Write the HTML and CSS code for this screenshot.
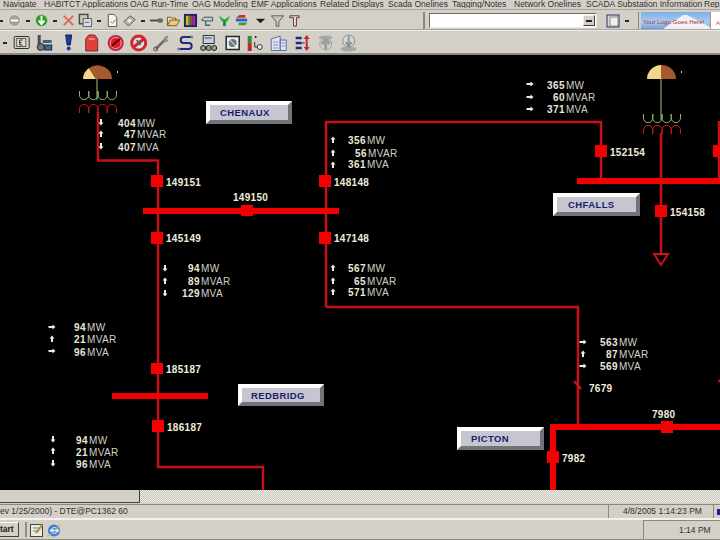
FILE: index.html
```html
<!DOCTYPE html>
<html lang="en">
<head>
<meta charset="utf-8">
<title>One-line display</title>
<link rel="stylesheet" href="styles.css">
</head>
<body>
<div class="app">
  <nav class="menu">
    <span>Navigate</span>
    <span>HABITCT Applications</span>
    <span>OAG Run-Time</span>
    <span>OAG Modeling</span>
    <span>EMF Applications</span>
    <span>Related Displays</span>
    <span>Scada Onelines</span>
    <span>Tagging/Notes</span>
    <span>Network Onelines</span>
    <span>SCADA Substation Information</span>
    <span>Rep</span>
  </nav>

  <div class="tb tb1">
    <i class="drop first"></i>
    <svg class="ico" viewBox="0 0 16 16"><circle cx="8" cy="8" r="6.500" fill="#a4a49c" stroke="#e8e8e0"/><path d="M4 8h8" stroke="#fff" stroke-width="2"/></svg>
    <i class="drop"></i>
    <svg class="ico" viewBox="0 0 16 16"><circle cx="8" cy="8" r="6.500" fill="#2f9a2a" stroke="#bcd8b0"/><path d="M8 3v7M5 8l3 4 3-4" fill="none" stroke="#fff" stroke-width="2"/></svg>
    <i class="drop"></i>
    <svg class="ico" viewBox="0 0 16 16"><path d="M3 3l10 10M13 3L3 13" stroke="#d86a58" stroke-width="2"/></svg>
    <svg class="ico" viewBox="0 0 16 16"><rect x="1.500" y="1.500" width="9" height="10" fill="#c8c8c0" stroke="#404848" stroke-width="1.500"/><rect x="5.500" y="6" width="9" height="8.500" fill="#d8dce0" stroke="#506068"/><path d="M7 10h5" stroke="#4a6a88"/></svg>
    <i class="drop"></i>
    <svg class="ico" viewBox="0 0 16 16"><path d="M3.500 1.500h6l3 3v10h-9z" fill="#f4f4ec" stroke="#505050"/><path d="M6 9l2 2 3-4" fill="none" stroke="#3a9a48"/></svg>
    <svg class="ico" viewBox="0 0 16 16"><path d="M2 9l7-6 5 4-7 7z" fill="#b8b8b0" stroke="#585858"/><circle cx="8" cy="8" r="2" fill="#f0f0e8"/></svg>
    <i class="drop"></i>
    <svg class="ico" viewBox="0 0 16 16"><path d="M1 8h9" stroke="#484848" stroke-width="2"/><ellipse cx="12" cy="8" rx="3" ry="2.500" fill="#686868"/></svg>
    <svg class="ico" viewBox="0 0 16 16"><path d="M1.500 13.500v-9h4l1 1h4v2" fill="#f0dca0" stroke="#705830"/><path d="M1.500 13.500l3-6h10l-3 6z" fill="#e8c878" stroke="#705830"/></svg>
    <svg class="ico" viewBox="0 0 16 16"><rect x="1" y="1" width="14" height="14" fill="#1c2458"/><rect x="3" y="3" width="3" height="10" fill="#d8b828"/><rect x="6" y="3" width="2" height="10" fill="#38a048"/><rect x="8" y="3" width="2" height="10" fill="#c83838"/><rect x="10" y="3" width="3" height="10" fill="#a028a0"/></svg>
    <svg class="ico" viewBox="0 0 16 16"><path d="M1.500 7.500l3-3h9v4h-9z" fill="#d0d0c8" stroke="#384848"/><path d="M6 9v4h5" fill="none" stroke="#208078" stroke-width="1.500"/></svg>
    <svg class="ico" viewBox="0 0 16 16"><path d="M2 3l6 4 6-4-3 6h-6z" fill="#28b048"/><path d="M8 8v6" stroke="#189038" stroke-width="3"/></svg>
    <svg class="ico" viewBox="0 0 16 16"><path d="M6 2h6v3H2z" fill="#c83028"/><path d="M2 6h12v3H2z" fill="#2860c8"/><path d="M5 10h9l-2 3H5z" fill="#30a048"/></svg>
    <svg class="ico nudge" viewBox="0 0 16 16"><path d="M3 6h10l-5 5z" fill="#202020"/></svg>
    <svg class="ico" viewBox="0 0 16 16"><path d="M1.500 3h13l-5 6v5h-3V9z" fill="#c8c8c0" stroke="#585858"/></svg>
    <svg class="ico" viewBox="0 0 16 16"><path d="M3 3h10v2h-3v9H7V5H3z" fill="#f0e8e0" stroke="#602828"/></svg>
    <div class="tb-right">
      <i class="grip"></i>
      <div class="combo"><b class="combo-btn"></b></div>
      <svg class="ico box" viewBox="0 0 14 14"><rect x="1" y="1" width="12" height="12" fill="#d8d8d0" stroke="#202c80"/><rect x="4" y="3" width="8" height="9" fill="#f0f0e8" stroke="#888"/></svg>
      <i class="drop"></i>
      <i class="sep"></i>
      <div class="logo"><svg class="peak" viewBox="0 0 69 17" preserveAspectRatio="none"><path d="M22 17 L42 3 L46 3 L69 15 V17 Z" fill="#eef2f6"/></svg><span class="logo-text">Your Logo Goes Here!</span></div>
      <div class="logo2">A</div>
    </div>
  </div>

  <div class="tb tb2">
    <i class="drop"></i>
    <svg class="ico2" viewBox="0 0 18 18"><rect x="1.500" y="2.500" width="15" height="12" rx="1" fill="#d4d0c8" stroke="#303030"/><rect x="4" y="4.500" width="9" height="8" fill="#e0e0d8" stroke="#606060"/><path d="M7 6v5h3M7 8.500h2M7 6h3" fill="none" stroke="#303030"/></svg>
    <svg class="ico2" viewBox="0 0 18 18"><rect x="2" y="1" width="3" height="9" fill="#405058"/><rect x="7" y="6" width="9" height="3" fill="#506068"/><circle cx="5" cy="13" r="3.500" fill="#707878" stroke="#202828"/><rect x="9" y="11" width="7" height="5" fill="#3868a0" stroke="#182838"/></svg>
    <svg class="ico2" viewBox="0 0 18 18"><path d="M6 1h6l-1.500 10h-3z" fill="#2038a8" stroke="#101c58"/><circle cx="9" cy="14.500" r="2" fill="#2038a8"/></svg>
    <svg class="ico2" viewBox="0 0 18 18"><path d="M3 5l3-4h6l3 4v12H3z" fill="#e04038" stroke="#703028"/><path d="M6 5h6" stroke="#f0d0c8"/></svg>
    <svg class="ico2" viewBox="0 0 18 18"><circle cx="9" cy="9" r="8" fill="#c02840"/><circle cx="9" cy="9" r="5.500" fill="#e81818" stroke="#f0a0b0"/><path d="M5 12l8-7" stroke="#500818" stroke-width="2"/></svg>
    <svg class="ico2" viewBox="0 0 18 18"><circle cx="9" cy="9" r="7" fill="#e0e0d8" stroke="#d02830" stroke-width="3"/><path d="M4 13L14 5" stroke="#d02830" stroke-width="3"/><path d="M7 6l4 5" stroke="#606060" stroke-width="2"/></svg>
    <svg class="ico2" viewBox="0 0 18 18"><path d="M3 15l9-9" stroke="#707068" stroke-width="2.500"/><path d="M11 7a4 4 0 0 1 5-5l-2 3 2 2a4 4 0 0 1-5 0z" fill="#909088"/><circle cx="3" cy="15" r="2" fill="none" stroke="#505050"/></svg>
    <svg class="ico2" viewBox="0 0 18 18"><path d="M15 3H7a3 3 0 0 0 0 6h5a3 3 0 0 1 0 6H2" fill="none" stroke="#1c2c78" stroke-width="2"/><circle cx="15" cy="3" r="1.500" fill="#708090"/><circle cx="2" cy="15" r="1.500" fill="#708090"/></svg>
    <svg class="ico2" viewBox="0 0 18 18"><rect x="3.500" y="1.500" width="11" height="8" fill="#c8d0d8" stroke="#303840"/><path d="M5 4h7" stroke="#2050a0"/><circle cx="3.500" cy="14" r="2.500" fill="#a0a098" stroke="#202020"/><circle cx="9" cy="14" r="2.500" fill="#a0a098" stroke="#202020"/><circle cx="14.500" cy="14" r="2.500" fill="#a0a098" stroke="#202020"/></svg>
    <svg class="ico2" viewBox="0 0 18 18"><rect x="2.500" y="2.500" width="13" height="13" fill="#f0f0e8" stroke="#202830" stroke-width="1.500"/><circle cx="9" cy="9" r="4" fill="#687888"/><path d="M5 5l8 8" stroke="#fff"/></svg>
    <svg class="ico2" viewBox="0 0 18 18"><rect x="1" y="2" width="4" height="7" fill="#309038"/><rect x="1" y="9" width="4" height="8" fill="#c02828"/><circle cx="9" cy="3" r="1" fill="#202020"/><path d="M8 8v5h4" fill="none" stroke="#303030"/><circle cx="13" cy="13" r="2.500" fill="#f0f0e8" stroke="#303030"/></svg>
    <svg class="ico2" viewBox="0 0 18 18"><path d="M1.500 16.500V5l9-3v14.500zM10.500 6h6v10.500h-6z" fill="#e0e4f0" stroke="#5870b0"/><path d="M3.500 8h5M3.500 11h5M3.500 14h5M12 9h3M12 12h3" stroke="#8090c0"/></svg>
    <svg class="ico2" viewBox="0 0 18 18"><path d="M2 4h6M2 9h6M2 14h6" stroke="#1c2c88" stroke-width="2.500"/><path d="M13 1l3 4h-6zM13 17l3-4h-6z" fill="#c02838"/><path d="M13 5v8" stroke="#c02838" stroke-width="2"/><path d="M8 9h3" stroke="#303030"/></svg>
    <svg class="ico2" viewBox="0 0 18 18"><ellipse cx="9" cy="3.500" rx="7" ry="2" fill="#a8a8a0"/><path d="M9 16V8M5 10l4-5 4 5" fill="none" stroke="#98a0a0" stroke-width="3"/><circle cx="9" cy="10" r="6" fill="none" stroke="#a8a8a0"/></svg>
    <svg class="ico2" viewBox="0 0 18 18"><ellipse cx="9" cy="15" rx="8" ry="2.500" fill="#a0a8a8"/><circle cx="9" cy="7" r="6" fill="#d8d8d0" stroke="#88908c"/><path d="M9 2v9M6 8l3 4 3-4" fill="none" stroke="#889498" stroke-width="2"/></svg>
  </div>

  <main class="canvas">
    <svg class="diagram" viewBox="0 55 720 435">
      <defs>
        <g id="arrow-up"><path d="M0-3.500L2.500-.5H1V3H-1V-.5H-2.500Z"/></g>
        <g id="arrow-down"><path d="M0 3.500L2.500 .5H1V-3H-1V.5H-2.500Z"/></g>
        <g id="arrow-right"><path d="M-3.500-1H.5V-2.500L3.500 0 .5 2.500V1H-3.500Z"/></g>
        <g id="green-coil"><path d="M0 0v4a4.600 4.600 0 0 0 9.250 0v-4v4a4.600 4.600 0 0 0 9.250 0v-4v4a4.600 4.600 0 0 0 9.250 0v-4v4a4.600 4.600 0 0 0 9.250 0v-4"/></g>
        <g id="red-coil"><path d="M0 9v-4a4.600 4.600 0 0 1 9.250 0v4v-4a4.600 4.600 0 0 1 9.250 0v4v-4a4.600 4.600 0 0 1 9.250 0v4v-4a4.600 4.600 0 0 1 9.250 0v4"/></g>
      </defs>

      <g class="thin">
        <path d="M98 112V160.500H158V467H263V490"/>
        <path d="M326 307V122H601V181"/>
        <path d="M326 307H578V424"/>
        <path d="M661 133V253"/>
        <path d="M719 121V180"/>
        <path d="M574 381L581 389"/>
        <path d="M718 381H720"/>
      </g>
      <path class="thin tri" d="M654 254H668L661 265Z"/>

      <g class="bus">
        <rect x="143" y="208" width="196" height="6"/>
        <rect x="577" y="178" width="143" height="6"/>
        <rect x="112" y="393" width="96" height="6"/>
        <rect x="550" y="424" width="170" height="6"/>
        <rect x="550" y="424" width="6" height="66"/>
      </g>
      <g class="bus">
        <rect x="151" y="175" width="12" height="12"/>
        <rect x="241" y="205" width="12" height="11"/>
        <rect x="151" y="232" width="12" height="12"/>
        <rect x="319" y="175" width="12" height="12"/>
        <rect x="319" y="232" width="12" height="12"/>
        <rect x="595" y="145" width="12" height="12"/>
        <rect x="713" y="145" width="7" height="12"/>
        <rect x="655" y="205" width="12" height="12"/>
        <rect x="151" y="363" width="12" height="11"/>
        <rect x="152" y="420" width="12" height="12"/>
        <rect x="661" y="421" width="12" height="12"/>
        <rect x="547" y="451" width="12" height="12"/>
      </g>

      <!-- generators -->
      <path class="dome-cream" d="M83 79a14.500 14 0 0 1 6-11L96 79Z"/>
      <path class="dome-brown" d="M89 68a14.500 14 0 0 1 23 11H96Z"/>
      <path class="stem" d="M97 79V100"/>
      <use class="coil-g" href="#green-coil" x="79.500" y="91"/>
      <use class="coil-r" href="#red-coil" x="79.500" y="104"/>
      <rect class="speck" x="117" y="71" width="1" height="2"/>

      <path class="dome-cream" d="M647 79a14.500 14 0 0 1 14-14V79Z"/>
      <path class="dome-brown" d="M661 65a14.500 14 0 0 1 15 14H661Z"/>
      <path class="stem" d="M661 79V120"/>
      <use class="coil-g" href="#green-coil" x="643.500" y="114"/>
      <use class="coil-r" href="#red-coil" x="643.500" y="125"/>
      <rect class="speck" x="681" y="71" width="1" height="2"/>

      <!-- flow arrows -->
      <g class="arw">
        <use href="#arrow-down" x="101" y="122"/><use href="#arrow-up" x="101" y="134"/><use href="#arrow-down" x="101" y="146"/>
        <use href="#arrow-up" x="333" y="140"/><use href="#arrow-up" x="333" y="153"/><use href="#arrow-up" x="333" y="165"/>
        <use href="#arrow-right" x="530" y="84"/><use href="#arrow-right" x="530" y="97"/><use href="#arrow-right" x="530" y="109"/>
        <use href="#arrow-down" x="165" y="268"/><use href="#arrow-up" x="165" y="281"/><use href="#arrow-down" x="165" y="293"/>
        <use href="#arrow-up" x="333" y="268"/><use href="#arrow-up" x="333" y="281"/><use href="#arrow-up" x="333" y="292"/>
        <use href="#arrow-right" x="52" y="327"/><use href="#arrow-up" x="52" y="339"/><use href="#arrow-right" x="52" y="351"/>
        <use href="#arrow-right" x="583" y="342"/><use href="#arrow-up" x="583" y="354"/><use href="#arrow-right" x="583" y="366"/>
        <use href="#arrow-down" x="53" y="439"/><use href="#arrow-up" x="53" y="451"/><use href="#arrow-down" x="53" y="463"/>
      </g>

      <!-- readings -->
      <g class="val">
        <text x="118" y="127">404<tspan class="unit" dx="1">MW</tspan></text>
        <text x="124" y="138">47<tspan class="unit" dx="1">MVAR</tspan></text>
        <text x="118" y="151">407<tspan class="unit" dx="1">MVA</tspan></text>
        <text x="348" y="144">356<tspan class="unit" dx="1">MW</tspan></text>
        <text x="355" y="157">56<tspan class="unit" dx="1">MVAR</tspan></text>
        <text x="348" y="168">361<tspan class="unit" dx="1">MVA</tspan></text>
        <text x="547" y="89">365<tspan class="unit" dx="1">MW</tspan></text>
        <text x="553" y="101">60<tspan class="unit" dx="1">MVAR</tspan></text>
        <text x="547" y="113">371<tspan class="unit" dx="1">MVA</tspan></text>
        <text x="188" y="272">94<tspan class="unit" dx="1">MW</tspan></text>
        <text x="188" y="285">89<tspan class="unit" dx="1">MVAR</tspan></text>
        <text x="182" y="297">129<tspan class="unit" dx="1">MVA</tspan></text>
        <text x="348" y="272">567<tspan class="unit" dx="1">MW</tspan></text>
        <text x="354" y="285">65<tspan class="unit" dx="1">MVAR</tspan></text>
        <text x="348" y="296">571<tspan class="unit" dx="1">MVA</tspan></text>
        <text x="74" y="331">94<tspan class="unit" dx="1">MW</tspan></text>
        <text x="74" y="343">21<tspan class="unit" dx="1">MVAR</tspan></text>
        <text x="74" y="356">96<tspan class="unit" dx="1">MVA</tspan></text>
        <text x="600" y="346">563<tspan class="unit" dx="1">MW</tspan></text>
        <text x="606" y="358">87<tspan class="unit" dx="1">MVAR</tspan></text>
        <text x="600" y="370">569<tspan class="unit" dx="1">MVA</tspan></text>
        <text x="76" y="444">94<tspan class="unit" dx="1">MW</tspan></text>
        <text x="76" y="456">21<tspan class="unit" dx="1">MVAR</tspan></text>
        <text x="76" y="468">96<tspan class="unit" dx="1">MVA</tspan></text>
      </g>

      <!-- node ids -->
      <g class="node">
        <text x="166" y="186">149151</text>
        <text x="233" y="201">149150</text>
        <text x="166" y="242">145149</text>
        <text x="334" y="186">148148</text>
        <text x="334" y="242">147148</text>
        <text x="610" y="156">152154</text>
        <text x="670" y="216">154158</text>
        <text x="166" y="373">185187</text>
        <text x="167" y="431">186187</text>
        <text x="589" y="392">7679</text>
        <text x="652" y="418">7980</text>
        <text x="562" y="462">7982</text>
      </g>

      <!-- station buttons -->
      <g class="st">
        <rect class="st-dark" x="206" y="101" width="86" height="23"/><path class="st-light" d="M206 124V101H292L288 105H210V120Z"/><rect class="st-face" x="210" y="105" width="78" height="15"/><text x="220" y="116">CHENAUX</text>
        <rect class="st-dark" x="553" y="193" width="87" height="23"/><path class="st-light" d="M553 216V193H640L636 197H557V212Z"/><rect class="st-face" x="557" y="197" width="79" height="15"/><text x="568" y="208">CHFALLS</text>
        <rect class="st-dark" x="238" y="384" width="86" height="22"/><path class="st-light" d="M238 406V384H324L320 388H242V402Z"/><rect class="st-face" x="242" y="388" width="78" height="14"/><text x="251" y="399">REDBRIDG</text>
        <rect class="st-dark" x="457" y="427" width="87" height="23"/><path class="st-light" d="M457 450V427H544L540 431H461V446Z"/><rect class="st-face" x="461" y="431" width="79" height="15"/><text x="471" y="442">PICTON</text>
      </g>
    </svg>
  </main>

  <div class="hscroll"><div class="thumb"></div><div class="track"></div></div>

  <footer class="status">
    <div class="st-main">ev 1/25/2000) - DTE@PC1362 60</div>
    <div class="st-time">4/8/2005 1:14:23 PM</div>
    <div class="st-end"><i class="st-blue"></i></div>
  </footer>

  <div class="task">
    <div class="start">tart</div>
    <i class="grip task-grip"></i>
    <svg class="ql" viewBox="0 0 16 16"><rect x="1.500" y="2.500" width="12" height="12" fill="#e8ecd8" stroke="#304858"/><path d="M4 6h6M4 9h6" stroke="#608098"/><path d="M7 11L14 2" stroke="#c88028" stroke-width="2"/></svg>
    <svg class="ql" viewBox="0 0 16 16"><circle cx="8" cy="8.500" r="6" fill="#3c80d8"/><path d="M4 8.500h9" stroke="#e8f0f8" stroke-width="2"/><circle cx="8.500" cy="8.500" r="3" fill="none" stroke="#e8f0f8"/><path d="M1 14c2 1 10-7 13-12" fill="none" stroke="#d8b050"/></svg>
    <div class="tray">1:14 PM</div>
  </div>
</div>
</body>
</html>
```

FILE: styles.css
```css
* { box-sizing: border-box; }
html, body { margin: 0; padding: 0; background: #d4d0c8; overflow: hidden; }
.app {
  width: 720px; height: 540px; display: flex; flex-direction: column;
  font-family: "Liberation Sans", Arial, sans-serif; color: #1c1c1c; overflow: hidden;
}

/* menu */
.menu {
  height: 10px; flex: none; display: grid; overflow: hidden; align-items: start;
  grid-template-columns: 41px 86px 62px 59px 69px 68px 64px 62px 72px 118px 16px;
  padding-left: 3px; font-size: 8.500px; line-height: 8px; white-space: nowrap;
  color: #303030; border-bottom: 1px solid #a8a49c; background: #d4d0c8;
}
.menu span { overflow: hidden; }

/* toolbars */
.tb { flex: none; display: flex; align-items: center; background: #d4d0c8; }
.tb1 { height: 20px; padding-top: 2px; border-bottom: 1px solid #aaa69e; }
.tb2 { height: 25px; padding-top: 2px; border-bottom: 2px solid #8c8880; border-top: 1px solid #eeece6; }
.ico { width: 17px; height: 15px; flex: none; display: block; }
.ico2 { width: 23.400px; height: 18px; flex: none; display: block; }
.nudge { margin-left: 2px; }
.drop { width: 10px; height: 4px; flex: none; display: block; }
.drop::after { content: ""; display: block; width: 4px; height: 2px; margin: 1px auto; background: #282828; }
.drop.first { width: 6px; margin-left: -2px; margin-right: 2px; }

.tb-right { margin-left: auto; width: 297px; height: 17px; display: flex; align-items: center; }
.grip { width: 2px; height: 17px; flex: none; display: block; background: #8c8880; }
.combo {
  width: 168px; height: 15px; margin-left: 4px; flex: none; display: flex; justify-content: flex-end; align-items: center;
  background: #fff; border: 1px solid #6c6860; border-right-color: #eee; border-bottom-color: #eee;
}
.combo-btn {
  width: 12px; height: 11px; margin-right: 1px; display: block; background: #d4d0c8;
  border: 1px solid #404040; border-top-color: #f0f0f0; border-left-color: #f0f0f0;
  background-image: linear-gradient(#202020, #202020); background-size: 6px 2px;
  background-position: center; background-repeat: no-repeat;
}
.box { margin-left: 9px; width: 14px; height: 14px; }
.tb-right .drop { margin-left: 2px; }
.sep { width: 1px; height: 17px; margin-left: 6px; flex: none; display: block; background: #8c8880; }
.logo {
  width: 69px; height: 17px; margin-left: 2px; flex: none; position: relative; overflow: hidden;
  background: linear-gradient(#7cb0e4, #a8cdf0 60%, #70a0d8);
}
.peak { position: absolute; left: 0; top: 0; width: 69px; height: 17px; }
.logo-text {
  position: absolute; left: 2px; top: 5px; font-size: 6.200px; line-height: 9px; color: #c01830; white-space: nowrap;
}
.logo2 {
  width: 12px; height: 17px; flex: none; background: #fff; color: #d04040; border-left: 1px solid #b09090;
  font-size: 6px; line-height: 22px; padding-left: 5px; overflow: hidden;
}

/* diagram */
.canvas { flex: none; height: 435px; background: #000; }
.diagram { display: block; width: 720px; height: 435px; }
.thin { fill: none; stroke: #c8101a; stroke-width: 2.500; }
.tri { stroke: #d01018; stroke-width: 2; }
.bus { fill: #f40000; }
.dome-cream { fill: #f0d888; }
.dome-brown { fill: #a55a2c; }
.stem { stroke: #9cc080; stroke-width: 1; fill: none; }
.coil-g { fill: none; stroke: #88b868; stroke-width: 1; }
.coil-r { fill: none; stroke: #c81818; stroke-width: 1; }
.speck { fill: #d8d8d0; }
.arw { fill: #f0ece0; }
.val text { font-size: 10px; font-weight: 700; fill: #ebe7da; letter-spacing: .4px; }
.val .unit { font-weight: 400; fill: #d4d0c8; }
.node text { font-size: 10px; font-weight: 700; fill: #f0ecdc; letter-spacing: .3px; }
.st-dark { fill: #72727a; }
.st-light { fill: #fff; }
.st-face { fill: #c6c6d0; }
.st text { font-size: 9.500px; font-weight: 700; fill: #1c1c6c; letter-spacing: .4px; }

/* scrollbar */
.hscroll { flex: none; height: 13px; margin-bottom: 1px; display: flex; }
.thumb { width: 140px; background: #d4d0c8; border-right: 1px solid #404040; border-bottom: 1px solid #404040; }
.track {
  flex: 1; background-color: #fff;
  background-image: conic-gradient(#c4c0b8 25%, #f4f2ee 25% 50%, #c4c0b8 50% 75%, #f4f2ee 75%);
  background-size: 2px 2px;
}

/* status */
.status {
  flex: none; height: 16px; display: flex; font-size: 8.500px; line-height: 13px;
  border-top: 1px solid #8c8880; border-bottom: 2px solid #f4f2ee; white-space: nowrap; color: #303030;
}
.st-main { width: 609px; border-right: 1px solid #8c8880; }
.st-time { width: 104px; padding-left: 13px; border-right: 1px solid #8c8880; margin-left: 1px; }
.st-end { flex: 1; display: flex; align-items: center; justify-content: flex-end; }
.st-blue { display: block; width: 3px; height: 6px; background: #1820a0; }

/* taskbar */
.task { flex: 1; display: flex; align-items: center; border-bottom: 1px solid #908c84; font-size: 8.500px; }
.start {
  width: 19px; height: 15px; flex: none; font-weight: 700; line-height: 13px; white-space: nowrap;
  border: 1px solid #404040; border-left: 0; border-top-color: #fff; color: #202020;
}
.task-grip { margin-left: 6px; height: 15px; width: 2px; background: #908c84; }
.ql { width: 16px; height: 16px; flex: none; margin-left: 1px; }
.task-grip + .ql { margin-left: 2px; }
.tray {
  margin-left: auto; width: 77px; height: 19px; align-self: flex-end; padding: 3px 0 0 35px; line-height: 12px; white-space: nowrap;
  border-left: 1px solid #8c8880; border-top: 1px solid #8c8880; color: #303030;
}
```
